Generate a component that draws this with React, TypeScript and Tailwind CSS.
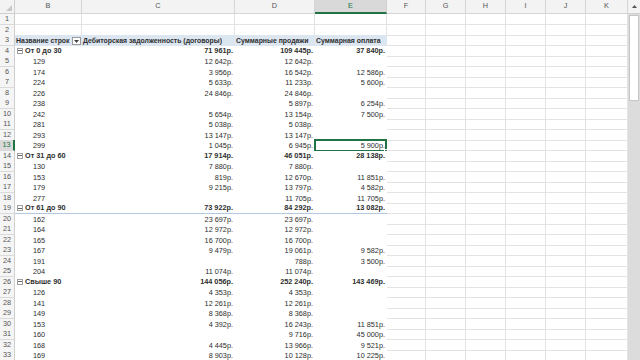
import React from "react";

type RowT = {
  n: number;
  t: "empty" | "head" | "group" | "item";
  b?: string;
  c?: string;
  d?: string;
  e?: string;
};

const rows: RowT[] = [
  { n: 1, t: "empty" },
  { n: 2, t: "empty" },
  { n: 3, t: "head", b: "Название строк", c: "Дебиторская задолженность (договоры)", d: "Суммарные продажи", e: "Суммарная оплата" },
  { n: 4, t: "group", b: "От 0 до 30", c: "71 961р.", d: "109 445р.", e: "37 840р." },
  { n: 5, t: "item", b: "129", c: "12 642р.", d: "12 642р.", e: "" },
  { n: 6, t: "item", b: "174", c: "3 956р.", d: "16 542р.", e: "12 586р." },
  { n: 7, t: "item", b: "224", c: "5 633р.", d: "11 233р.", e: "5 600р." },
  { n: 8, t: "item", b: "226", c: "24 846р.", d: "24 846р.", e: "" },
  { n: 9, t: "item", b: "238", c: "", d: "5 897р.", e: "6 254р." },
  { n: 10, t: "item", b: "242", c: "5 654р.", d: "13 154р.", e: "7 500р." },
  { n: 11, t: "item", b: "281", c: "5 038р.", d: "5 038р.", e: "" },
  { n: 12, t: "item", b: "293", c: "13 147р.", d: "13 147р.", e: "" },
  { n: 13, t: "item", b: "299", c: "1 045р.", d: "6 945р.", e: "5 900р." },
  { n: 14, t: "group", b: "От 31 до 60", c: "17 914р.", d: "46 051р.", e: "28 138р." },
  { n: 15, t: "item", b: "130", c: "7 880р.", d: "7 880р.", e: "" },
  { n: 16, t: "item", b: "153", c: "819р.", d: "12 670р.", e: "11 851р." },
  { n: 17, t: "item", b: "179", c: "9 215р.", d: "13 797р.", e: "4 582р." },
  { n: 18, t: "item", b: "277", c: "", d: "11 705р.", e: "11 705р." },
  { n: 19, t: "group", b: "От 61 до 90", c: "73 922р.", d: "84 292р.", e: "13 082р." },
  { n: 20, t: "item", b: "162", c: "23 697р.", d: "23 697р.", e: "" },
  { n: 21, t: "item", b: "164", c: "12 972р.", d: "12 972р.", e: "" },
  { n: 22, t: "item", b: "165", c: "16 700р.", d: "16 700р.", e: "" },
  { n: 23, t: "item", b: "167", c: "9 479р.", d: "19 061р.", e: "9 582р." },
  { n: 24, t: "item", b: "191", c: "", d: "788р.", e: "3 500р." },
  { n: 25, t: "item", b: "204", c: "11 074р.", d: "11 074р.", e: "" },
  { n: 26, t: "group", b: "Свыше 90", c: "144 056р.", d: "252 240р.", e: "143 469р." },
  { n: 27, t: "item", b: "126", c: "4 353р.", d: "4 353р.", e: "" },
  { n: 28, t: "item", b: "141", c: "12 261р.", d: "12 261р.", e: "" },
  { n: 29, t: "item", b: "149", c: "8 368р.", d: "8 368р.", e: "" },
  { n: 30, t: "item", b: "153", c: "4 392р.", d: "16 243р.", e: "11 851р." },
  { n: 31, t: "item", b: "160", c: "", d: "9 716р.", e: "45 000р." },
  { n: 32, t: "item", b: "168", c: "4 445р.", d: "13 966р.", e: "9 521р." },
  { n: 33, t: "item", b: "169", c: "8 903р.", d: "10 128р.", e: "10 225р." },
];

const COLS = "grid grid-cols-[15px_67px_153px_80px_72px_39px_40px_40px_40px_40px_42px]";
const letters = ["B", "C", "D", "E", "F", "G", "H", "I", "J", "K"];

function Grid() {
  return <div className="h-full border-r border-b border-[#e3e3e3]" />;
}

function PivotCell({
  r,
  text,
  align,
  selected,
}: {
  r: RowT;
  text?: string;
  align: "left" | "right";
  selected?: boolean;
}) {
  if (r.t === "empty") return <Grid />;
  const base =
    r.t === "head"
      ? "bg-[#dce6f1] font-bold text-[6.9px]"
      : r.t === "group"
      ? "bg-white font-bold border-b border-[#b4c8e4]"
      : "bg-white";
  return (
    <div
      className={`relative h-full flex items-end whitespace-nowrap overflow-visible ${base} ${
        align === "right" ? "justify-end pr-[2px]" : "pl-[1px]"
      }`}
    >
      <span className="leading-[10px]">{text}</span>
      {selected && (
        <div className="absolute left-[-1px] top-[-1px] right-0 bottom-[-1px] border-2 border-[#217346]">
          <div className="absolute right-[-3px] bottom-[-3px] w-[4px] h-[4px] bg-[#217346] border border-white" />
        </div>
      )}
    </div>
  );
}

function LabelCell({ r }: { r: RowT }) {
  if (r.t === "empty") return <Grid />;
  if (r.t === "head") {
    return (
      <div className="relative h-full bg-[#dce6f1] font-bold text-[6.9px] flex items-end pl-[1px] whitespace-nowrap">
        <span className="leading-[10px]">{r.b}</span>
        <div className="absolute right-[1px] top-[2px] w-[9px] h-[8px] bg-white border border-[#9a9a9a] flex items-center justify-center">
          <svg width="5" height="3" viewBox="0 0 5 3">
            <path d="M0 0h5L2.5 3z" fill="#444" />
          </svg>
        </div>
      </div>
    );
  }
  if (r.t === "group") {
    return (
      <div className="h-full bg-white font-bold flex items-end pl-[2px] whitespace-nowrap border-b border-[#b4c8e4]">
        <div className="w-[6px] h-[6px] border border-[#a0a0a0] mb-[2px] mr-[2px] flex items-center justify-center">
          <div className="w-[4px] h-px bg-[#666]" />
        </div>
        <span className="leading-[10px]">{r.b}</span>
      </div>
    );
  }
  return (
    <div className="h-full bg-white flex items-end pl-[18px] whitespace-nowrap">
      <span className="leading-[10px]">{r.b}</span>
    </div>
  );
}

export default function App() {
  return (
    <div className="w-[640px] h-[360px] overflow-hidden bg-white flex font-['Liberation_Sans',Arial,sans-serif] text-[7.3px] text-[#2e2e2e]">
      <div className="w-[628px] flex flex-col border-r border-[#cfcfcf]">
        {/* column headers */}
        <div className={`${COLS} h-[14px] shrink-0 bg-[#f3f3f3]`}>
          <div className="relative border-r border-b border-[#cfcfcf]">
            <svg className="absolute right-[2px] bottom-[2px]" width="6" height="6" viewBox="0 0 6 6">
              <path d="M6 0v6H0z" fill="#c8c8c8" />
            </svg>
          </div>
          {letters.map((l) =>
            l === "E" ? (
              <div
                key={l}
                className="flex items-center justify-center bg-[#d9d9d9] border-r border-[#cfcfcf] border-b-2 border-b-[#217346] text-[#217346]"
              >
                {l}
              </div>
            ) : (
              <div
                key={l}
                className="flex items-center justify-center border-r border-b border-[#d6d6d6] text-[#555]"
              >
                {l}
              </div>
            )
          )}
        </div>
        {rows.map((r) => {
          const sel = r.n === 13;
          return (
            <div key={r.n} className={`${COLS} h-[10.5px] shrink-0`}>
              <div
                className={`flex items-center justify-center border-b border-[#dadada] ${
                  sel
                    ? "bg-[#d9d9d9] text-[#217346] border-r-2 border-r-[#217346]"
                    : "bg-[#f5f5f5] text-[#555] border-r border-r-[#cfcfcf]"
                }`}
              >
                <span className="leading-[10px]">{r.n}</span>
              </div>
              <LabelCell r={r} />
              <PivotCell r={r} text={r.c} align={r.t === "head" ? "left" : "right"} />
              <PivotCell r={r} text={r.d} align={r.t === "head" ? "left" : "right"} />
              <PivotCell r={r} text={r.e} align={r.t === "head" ? "left" : "right"} selected={sel} />
              <Grid />
              <Grid />
              <Grid />
              <Grid />
              <Grid />
              <Grid />
            </div>
          );
        })}
      </div>
      {/* vertical scrollbar */}
      <div className="w-[12px] h-full flex flex-col bg-[#dcdcdc]">
        <div className="h-[14px] bg-[#f3f3f3] flex items-center justify-center border-b border-[#d0d0d0]">
          <svg width="5" height="3" viewBox="0 0 5 3">
            <path d="M0 3h5L2.5 0z" fill="#555" />
          </svg>
        </div>
        <div className="mx-[1px] mt-[1px] h-[86px] bg-white border border-[#c6c6c6]" />
      </div>
    </div>
  );
}
